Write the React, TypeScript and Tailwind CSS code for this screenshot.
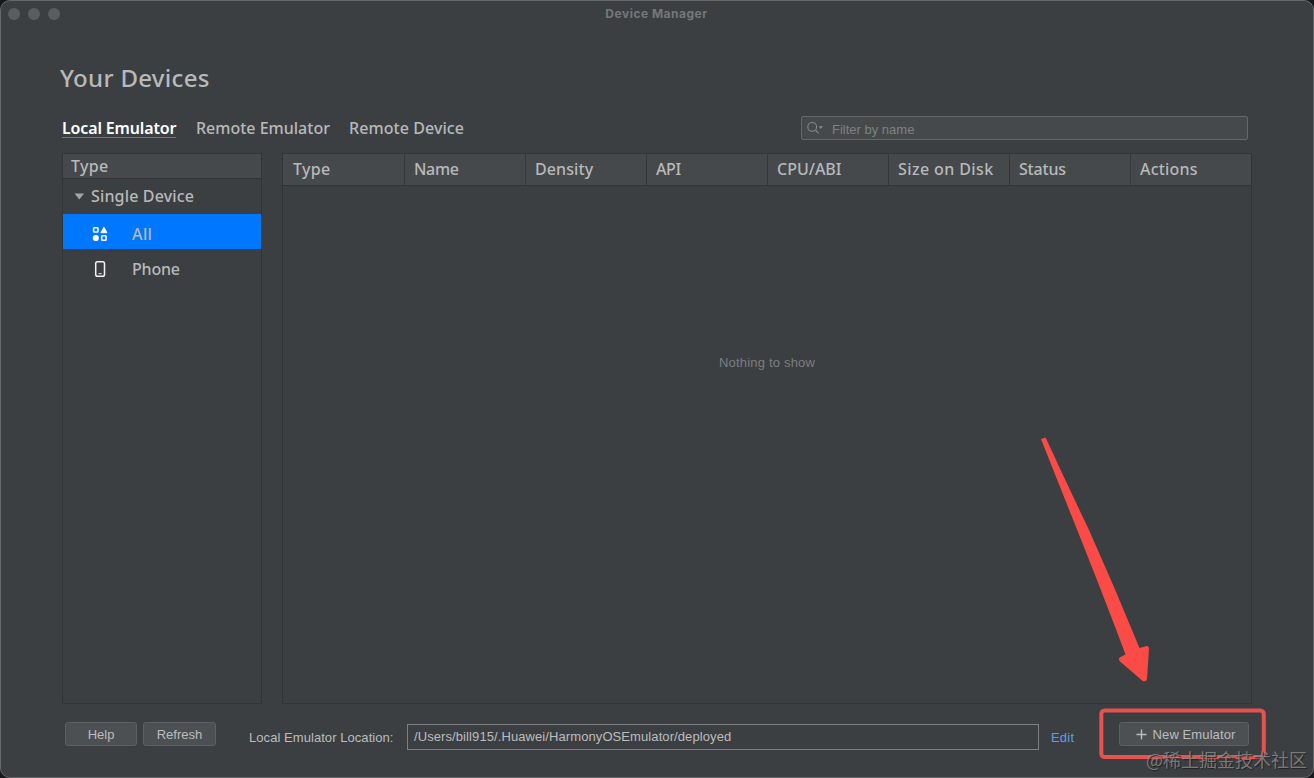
import React from "react";

const columns = [
  { label: "Type", style: "w-[122px] pl-[10px] tracking-[0.3px]" },
  { label: "Name", style: "w-[121px] pl-[9px] tracking-[-0.3px]" },
  { label: "Density", style: "w-[121px] pl-[9px] tracking-[0.1px]" },
  { label: "API", style: "w-[121px] pl-[9px] tracking-[-0.4px]" },
  { label: "CPU/ABI", style: "w-[121px] pl-[9px]" },
  { label: "Size on Disk", style: "w-[121px] pl-[9px] tracking-[0.4px]" },
  { label: "Status", style: "w-[121px] pl-[9px] tracking-[-0.2px]" },
  { label: "Actions", style: "w-[120px] border-r-0 pl-[9px] tracking-[0.2px]" },
];

function GridIcon() {
  return (
    <svg width="16" height="16" viewBox="0 0 16 16" fill="none" className="shrink-0">
      <rect x="1.6" y="1.7" width="4.4" height="4.4" rx="0.8" stroke="#fff" strokeWidth="1.5" />
      <path d="M11.9 1.1L15 6.7H8.8Z" fill="#fff" stroke="#fff" strokeWidth="0.8" strokeLinejoin="round" />
      <circle cx="3.8" cy="12" r="3.1" fill="#fff" />
      <rect x="9.7" y="9.8" width="4.4" height="4.4" rx="0.8" stroke="#fff" strokeWidth="1.5" />
    </svg>
  );
}

function PhoneIcon() {
  return (
    <svg width="16" height="18" viewBox="0 0 16 18" fill="none" className="shrink-0">
      <rect x="3.7" y="1.7" width="8.8" height="14.6" rx="1.8" stroke="#f2f2f2" strokeWidth="1.5" />
      <path d="M6.6 13.6h3" stroke="#d8d8d8" strokeWidth="1.1" />
    </svg>
  );
}

function SearchIcon() {
  return (
    <svg width="18" height="14" viewBox="0 0 18 14" fill="none" className="shrink-0">
      <circle cx="5.2" cy="5.9" r="4.4" stroke="#85898b" strokeWidth="1.1" />
      <path d="M8.4 9.1L11.6 12.3" stroke="#85898b" strokeWidth="1.1" />
      <path d="M11.5 5.3h4.600l-2.300 2.700Z" fill="#85898b" />
    </svg>
  );
}

function Button({ className, children }: { className: string; children: React.ReactNode }) {
  return (
    <button
      className={
        "flex h-[24px] items-center justify-center rounded-[3px] border border-[#5c6062] bg-[#4c5052] text-[13px] leading-none text-[#bbbdbe] " +
        className
      }
    >
      {children}
    </button>
  );
}

export default function App() {
  return (
    <div className="h-[778px] w-[1314px] overflow-hidden bg-[#17191a] font-['Liberation_Sans',sans-serif]">
      <div className="relative flex h-full w-full flex-col rounded-[10px] border border-[#65696b] bg-[#3c3f41]">
        <header className="relative flex h-[26px] shrink-0 items-center">
          <div className="flex gap-2 pl-[7px]">
            <span className="size-3 rounded-full bg-[#595c60]" />
            <span className="size-3 rounded-full bg-[#595c60]" />
            <span className="size-3 rounded-full bg-[#595c60]" />
          </div>
          <h1 className="flex-1 pr-[60px] pb-px text-center font-['Inter','Liberation_Sans',sans-serif] text-[12px] font-bold text-[#74787a]">
            <span className="tracking-[0.5px]">Device Manager</span>
          </h1>
        </header>

        <div className="flex flex-1 flex-col pl-[61px] font-['Noto_Sans',sans-serif] text-[#b7b9ba]">
          <h2 className="-ml-[2px] mt-[31px] h-[40px] text-[24px] leading-[40px] font-medium tracking-[0.3px]">
            <span>Your Devices</span>
          </h2>

          <div className="mt-[14px] flex h-[41px] w-[1186px] shrink-0 justify-between text-[16px]">
            <nav className="flex h-[26px] items-start pt-[4px] font-medium">
              <span className="h-[22px] w-[114px] border-b border-[#2f86dc] leading-[24px] font-semibold tracking-[-0.15px] whitespace-nowrap text-white">
                Local Emulator
              </span>
              <span className="ml-[20px] w-[133px] leading-[24px] whitespace-nowrap">Remote Emulator</span>
              <span className="ml-[20px] leading-[24px] tracking-[0.07px] whitespace-nowrap">Remote Device</span>
            </nav>
            <div className="mt-[4px] flex h-[24px] w-[447px] items-center rounded-[2px] border border-[#646869] bg-[#45494a] pl-[5px] font-['Liberation_Sans',sans-serif] text-[13px] text-[#7e8284]">
              <SearchIcon />
              <span className="ml-[7px] pt-[3px]">Filter by name</span>
            </div>
          </div>

          <div className="flex gap-[20px] text-[16px] font-medium">
            <aside className="flex h-[551px] w-[200px] flex-col border border-[#323436]">
              <div className="h-[25px] border-b border-[#323436] bg-[#45494b] pl-[8px] leading-[24px] tracking-[0.3px]">
                <span>Type</span>
              </div>
              <div className="flex h-[35px] items-center gap-[6px] pb-px pl-[11px]">
                <svg width="11" height="7" viewBox="0 0 11 7">
                  <path d="M0.5 0.5h9.600L5.300 6.500Z" fill="#a3a6a8" />
                </svg>
                <span className="tracking-[0.15px]">Single Device</span>
              </div>
              <div className="flex h-[35px] items-center bg-[#0077ff] pt-[4px] pl-[29px]">
                <GridIcon />
                <span className="ml-[24px] tracking-[0.4px]">All</span>
              </div>
              <div className="flex h-[35px] items-center pt-[5px] pl-[29px]">
                <PhoneIcon />
                <span className="ml-[24px] tracking-[-0.2px]">Phone</span>
              </div>
            </aside>

            <main className="flex h-[551px] w-[970px] flex-col border border-[#323436]">
              <div className="flex h-[32px] shrink-0 border-b border-[#323436] bg-[#45494b]">
                {columns.map((c) => (
                  <div key={c.label} className={"shrink-0 border-r border-[#35383a] leading-[30px] " + c.style}>
                    <span>{c.label}</span>
                  </div>
                ))}
              </div>
              <div className="pt-[169px] text-center font-['Liberation_Sans',sans-serif] text-[13px] leading-[16px] font-normal text-[#7b7e80]">
                <span className="tracking-[0.2px]">Nothing to show</span>
              </div>
            </main>
          </div>

          <footer className="flex items-start pl-[3px] font-['Liberation_Sans',sans-serif] text-[13px] text-[#bbbdbe]">
            <Button className="mt-[18px] w-[72px]">Help</Button>
            <Button className="mt-[18px] ml-[6px] w-[73px]">Refresh</Button>
            <span className="mt-[26px] ml-[33px] w-[145px] leading-[16px] tracking-[0.06px] whitespace-nowrap">
              Local Emulator Location:
            </span>
            <div className="mt-[20px] ml-[13px] h-[26px] w-[632px] border border-[#7c8082] pl-[6px] leading-[24px]">
              <span className="tracking-[0.09px]">/Users/bill915/.Huawei/HarmonyOSEmulator/deployed</span>
            </div>
            <a className="mt-[26px] ml-[12px] w-[24px] leading-[16px] tracking-[0.2px] text-[#589df6]">Edit</a>
            <Button className="mt-[18px] ml-[44px] w-[130px] gap-[6px] pl-[3px]">
              <svg width="11" height="11" viewBox="0 0 11 11">
                <path d="M5.5 0.5v10M0.5 5.5h10" stroke="#bbbdbe" strokeWidth="1.4" />
              </svg>
              <span className="tracking-[0.1px]">New Emulator</span>
            </Button>
          </footer>
        </div>

        <svg className="pointer-events-none absolute -top-px -left-px" width="1314" height="778" viewBox="0 0 1314 778" fill="none">
          <path
            d="M1041 439L1045.600 437.400Q1067 484 1089 530Q1115 588 1139.500 648L1146.500 646Q1149 645.600 1149 648.500L1147 679Q1146.600 682 1143 681.200L1120 661.500Q1117.500 658.500 1120.500 657L1125.500 654.500Q1107 605 1082 542Q1062 492 1041 439Z"
            fill="#fa4b46"
          />
          <rect x="1101.300" y="710.500" width="162.500" height="46.500" rx="3.500" stroke="#e8524d" strokeWidth="4" />
        </svg>
        <div className="absolute right-[6px] bottom-[6px] font-['Noto_Sans_CJK_SC',sans-serif] text-[18px] leading-[24px] whitespace-nowrap text-[#8b8d8e]/80 [text-shadow:1px_1px_1px_#222]">
          @稀土掘金技术社区
        </div>
      </div>
    </div>
  );
}
